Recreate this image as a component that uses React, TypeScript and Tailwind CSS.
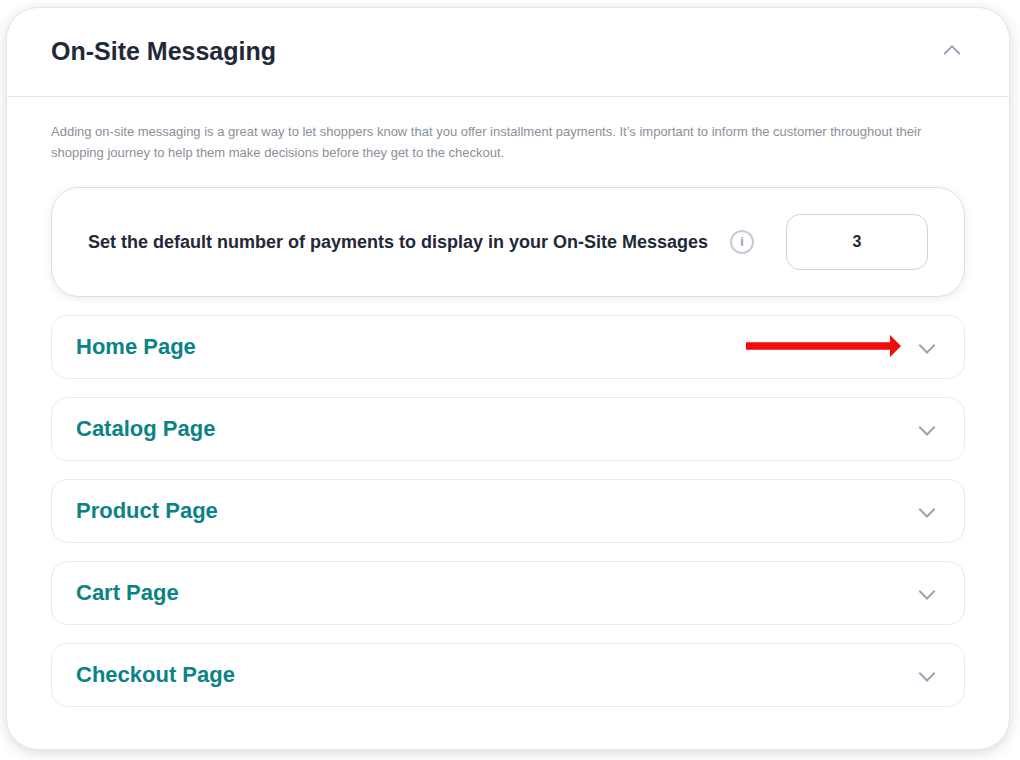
import React, { useState } from "react"

const pages = [
  { id: "home", label: "Home Page", highlighted: true },
  { id: "catalog", label: "Catalog Page", highlighted: false },
  { id: "product", label: "Product Page", highlighted: false },
  { id: "cart", label: "Cart Page", highlighted: false },
  { id: "checkout", label: "Checkout Page", highlighted: false },
]

function Chevron({ up = false }: { up?: boolean }) {
  return (
    <svg width="18" height="18" viewBox="0 0 18 18" fill="none" className="shrink-0 text-[#98a2b6]" aria-hidden="true">
      <path d={up ? "M1.3 12 L9 4.3 L16.7 12" : "M1.3 6.8 L9 14.5 L16.7 6.8"} stroke="currentColor" strokeWidth="2" />
    </svg>
  )
}

function PointerArrow() {
  return (
    <svg
      width="155"
      height="22"
      viewBox="0 0 155 22"
      className="absolute right-[63px] top-[19px] pointer-events-none"
      aria-hidden="true"
    >
      <path d="M0 7.2 H144 V0 L155 11 L144 22 V14.8 H0 Z" fill="#f50a0a" />
    </svg>
  )
}

export default function App() {
  const [payments, setPayments] = useState("3")

  return (
    <main className="bg-white pt-[7px] pr-2.5 pb-2.5 pl-1.5 font-['Liberation_Sans',Arial,sans-serif]">
      <section className="rounded-[32px] border border-[#e3e5e8] bg-white shadow-[0_3px_14px_rgba(0,0,0,0.14)]">
        {/* Header */}
        <header className="flex items-center justify-between border-b border-[#e6e7ea] pt-6 pr-12 pb-[26px] pl-11">
          <h1 className="text-[25px] leading-[38px] font-bold text-[#1f2937]">On-Site Messaging</h1>
          <button type="button" aria-label="Collapse On-Site Messaging" className="cursor-pointer">
            <Chevron up />
          </button>
        </header>

        <div className="px-11 pt-6 pb-[42px]">
          <p className="mb-6 text-[13px] leading-[21px] text-[#8a9099]">
            Adding on-site messaging is a great way to let shoppers know that you offer installment payments. It’s
            important to inform the customer throughout their shopping journey to help them make decisions before they
            get to the checkout.
          </p>

          {/* Default number of payments */}
          <div className="flex items-center rounded-[28px] border border-[#dcdfe5] px-9 py-[26px] shadow-[0_2px_8px_rgba(0,0,0,0.08)]">
            <label htmlFor="payments" className="text-lg font-bold text-[#1f2937]">
              Set the default number of payments to display in your On-Site Messages
            </label>
            <button
              type="button"
              aria-label="More information"
              className="ml-[22px] flex size-6 shrink-0 items-center justify-center rounded-full border-2 border-[#c5cbd8] text-[13px] leading-5 font-bold text-[#98a0ae]"
            >
              i
            </button>
            <input
              id="payments"
              type="text"
              inputMode="numeric"
              value={payments}
              onChange={(e) => setPayments(e.target.value)}
              className="ml-auto h-14 w-[142px] rounded-[14px] border border-[#cfd2dc] bg-white text-center text-base font-bold text-[#1f2937] outline-none focus:border-[#0b8386]"
            />
          </div>

          {/* Page sections */}
          <div className="mt-[18px] flex flex-col gap-[18px]">
            {pages.map((page) => (
              <button
                key={page.id}
                type="button"
                aria-expanded={false}
                className="relative flex h-16 w-full cursor-pointer items-center justify-between rounded-2xl border border-[#e9eaec] pr-7 pl-6 text-left"
              >
                <span className="text-[22px] leading-7 font-bold text-[#0b8386]">{page.label}</span>
                {page.highlighted && <PointerArrow />}
                <Chevron />
              </button>
            ))}
          </div>
        </div>
      </section>
    </main>
  )
}
